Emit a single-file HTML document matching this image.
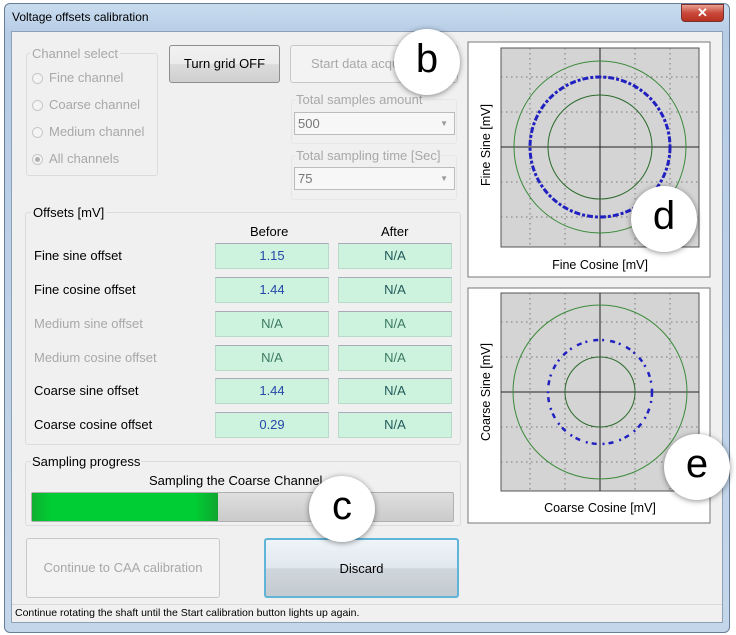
<!DOCTYPE html>
<html><head><style>
*{margin:0;padding:0;box-sizing:border-box}
body{width:736px;height:635px;background:#fff;position:relative;overflow:hidden;font-family:"Liberation Sans",Arial,sans-serif;font-size:13px;color:#000}
.a{position:absolute}
.grp{position:absolute;border:1px solid #dcdcdc;border-radius:3px}
.lbl{position:absolute;white-space:nowrap}
.dis{color:#a8a8a8}
.btn{position:absolute;border:1px solid #8e8e8e;border-radius:3px;background:linear-gradient(#f2f2f2,#ebebeb 50%,#dcdcdc 51%,#cfcfcf);text-align:center}
.box{position:absolute;background:#cdf3df;border:1px solid #b9d9c9;border-top-color:#aab;text-align:center;line-height:24px;width:114px;height:26px}
.circ{position:absolute;width:66px;height:66px;border-radius:50%;background:#fff;box-shadow:0 1px 6px rgba(0,0,0,.45);text-align:center;font-size:40px;line-height:60px}
.radio{position:absolute;width:11px;height:11px;border-radius:50%;border:1px solid #c8c8c8;background:#f4f4f4}
</style></head><body>
<div class="a" style="left:4px;top:3px;width:726px;height:630px;border:1px solid #6a7d96;border-radius:6px;background:linear-gradient(#c9dcef,#b7cde6 30px,#c4d6ea);"></div>
<div class="lbl" style="left:12px;top:10px;font-size:12px">Voltage offsets calibration</div>
<div class="a" style="left:681px;top:4px;width:43px;height:18px;border:1px solid #7a3030;border-radius:0 0 4px 4px;background:linear-gradient(#e8a090,#c9483a 50%,#b8301f);color:#fff;text-align:center;font-size:13px;font-weight:bold;line-height:16px">✕</div>
<div class="a" style="left:11px;top:31px;width:712px;height:592px;background:#f0f0f0;border:1px solid #8ea0b5"></div>
<div class="grp" style="left:26px;top:53px;width:132px;height:123px"></div>
<div class="lbl dis" style="left:30px;top:46px;background:#f0f0f0;padding:0 2px">Channel select</div>
<div class="radio" style="left:32px;top:73px"></div><div class="lbl dis" style="left:49px;top:70px">Fine channel</div>
<div class="radio" style="left:32px;top:100px"></div><div class="lbl dis" style="left:49px;top:97px">Coarse channel</div>
<div class="radio" style="left:32px;top:127px"></div><div class="lbl dis" style="left:49px;top:124px">Medium channel</div>
<div class="radio" style="left:32px;top:154px"><div class="a" style="left:2px;top:2px;width:5px;height:5px;border-radius:50%;background:#b0b0b0"></div></div><div class="lbl dis" style="left:49px;top:151px">All channels</div>
<div class="btn" style="left:169px;top:45px;width:111px;height:38px;line-height:36px">Turn grid OFF</div>
<div class="btn dis" style="left:290px;top:45px;width:168px;height:38px;line-height:36px;border-color:#c8c8c8;background:#f3f3f3;text-align:left;padding-left:20px">Start data acquisition</div>
<div class="grp" style="left:291px;top:99px;width:166px;height:45px;border-color:#e6e6e6"></div>
<div class="lbl dis" style="left:296px;top:92px;background:#f0f0f0">Total samples amount</div>
<div class="a" style="left:294px;top:112px;width:161px;height:23px;border:1px solid #bcbcbc;background:#f7f7f7;color:#777;padding:3px 3px;line-height:15px">500<span class="a" style="right:6px;top:3px;font-size:8px;color:#999">▼</span></div>
<div class="grp" style="left:291px;top:155px;width:166px;height:45px;border-color:#e6e6e6"></div>
<div class="lbl dis" style="left:296px;top:148px;background:#f0f0f0">Total sampling time [Sec]</div>
<div class="a" style="left:294px;top:167px;width:161px;height:23px;border:1px solid #bcbcbc;background:#f7f7f7;color:#777;padding:3px 3px;line-height:15px">75<span class="a" style="right:6px;top:3px;font-size:8px;color:#999">▼</span></div>
<div class="grp" style="left:25px;top:212px;width:436px;height:233px"></div>
<div class="lbl" style="left:31px;top:205px;background:#f0f0f0;padding:0 2px">Offsets [mV]</div>
<div class="lbl" style="left:250px;top:224px">Before</div>
<div class="lbl" style="left:381px;top:224px">After</div>
<div class="lbl" style="left:34px;top:248px">Fine sine offset</div>
<div class="box" style="left:215px;top:243px;color:#2648a8">1.15</div><div class="box" style="left:338px;top:243px;color:#235a5a">N/A</div>
<div class="lbl" style="left:34px;top:282px">Fine cosine offset</div>
<div class="box" style="left:215px;top:277px;color:#2648a8">1.44</div><div class="box" style="left:338px;top:277px;color:#235a5a">N/A</div>
<div class="lbl dis" style="left:34px;top:316px">Medium sine offset</div>
<div class="box" style="left:215px;top:311px;color:#3b7a5e">N/A</div><div class="box" style="left:338px;top:311px;color:#3b7a5e">N/A</div>
<div class="lbl dis" style="left:34px;top:350px">Medium cosine offset</div>
<div class="box" style="left:215px;top:345px;color:#3b7a5e">N/A</div><div class="box" style="left:338px;top:345px;color:#3b7a5e">N/A</div>
<div class="lbl" style="left:34px;top:383px">Coarse sine offset</div>
<div class="box" style="left:215px;top:378px;color:#2648a8">1.44</div><div class="box" style="left:338px;top:378px;color:#235a5a">N/A</div>
<div class="lbl" style="left:34px;top:417px">Coarse cosine offset</div>
<div class="box" style="left:215px;top:412px;color:#2648a8">0.29</div><div class="box" style="left:338px;top:412px;color:#235a5a">N/A</div>
<div class="grp" style="left:25px;top:461px;width:436px;height:65px"></div>
<div class="lbl" style="left:31px;top:454px;background:#f0f0f0;padding:0 1px">Sampling progress</div>
<div class="lbl" style="left:149px;top:473px">Sampling the Coarse Channel</div>
<div class="a" style="left:31px;top:492px;width:423px;height:30px;border:1px solid #b0b0b0;background:linear-gradient(#dedede,#cbcbcb);border-radius:2px"></div>
<div class="a" style="left:32px;top:493px;width:186px;height:28px;background:linear-gradient(90deg,#10b030,#00cc33 10%,#00cc33 88%,#10a530);"></div>
<div class="btn dis" style="left:26px;top:538px;width:194px;height:60px;line-height:58px;border-color:#c8c8c8;background:#f3f3f3">Continue to CAA calibration</div>
<div class="btn" style="left:264px;top:538px;width:195px;height:60px;line-height:58px;border:2px solid #5fb4d8;background:linear-gradient(#eef4f8,#e0e8ee 50%,#cfd6dc 51%,#c4cbd0)">Discard</div>
<div class="a" style="left:12px;top:604px;width:710px;height:1px;background:#d8d8d8"></div>
<div class="lbl" style="left:15px;top:607px;font-size:10.5px">Continue rotating the shaft until the Start calibration button lights up again.</div>
<svg class="a" style="left:467px;top:41px" width="245" height="488" viewBox="467 41 245 488" font-family="Liberation Sans, sans-serif">
<rect x="468" y="42" width="242" height="235" fill="#fff" stroke="#777"/>
<rect x="468" y="288" width="242" height="235" fill="#fff" stroke="#777"/>
<rect x="501" y="48" width="198" height="199" fill="#d4d4d4" stroke="#555"/>
<g stroke="#777" stroke-dasharray="1.5 3.5" stroke-width="1">
<path d="M530 48V247M565 48V247M635 48V247M670 48V247M501 77H699M501 112H699M501 182H699M501 217H699"/></g>
<path d="M600 48V247M501 147H699" stroke="#222"/>
<circle cx="600" cy="147" r="86" fill="none" stroke="#3a8a3a"/>
<circle cx="600" cy="147" r="52" fill="none" stroke="#2a6a2a"/>
<circle cx="600" cy="147" r="70" fill="none" stroke="#2020c0" stroke-width="3" stroke-dasharray="6 2 3 2"/>
<text x="600" y="269" font-size="12.5" text-anchor="middle">Fine Cosine [mV]</text>
<text transform="translate(490,145) rotate(-90)" font-size="12.5" text-anchor="middle">Fine Sine [mV]</text>
<rect x="501" y="293" width="198" height="198" fill="#d4d4d4" stroke="#555"/>
<g stroke="#777" stroke-dasharray="1.5 3.5">
<path d="M530 293V491M565 293V491M635 293V491M670 293V491M501 322H699M501 357H699M501 427H699M501 462H699"/></g>
<path d="M600 293V491M501 392H699" stroke="#222"/>
<circle cx="600" cy="392" r="87" fill="none" stroke="#3a8a3a"/>
<circle cx="600" cy="392" r="35" fill="none" stroke="#2a6a2a"/>
<circle cx="600" cy="392" r="52" fill="none" stroke="#2020c0" stroke-width="2.5" stroke-dasharray="5 4 2 6"/>
<text x="600" y="512" font-size="12.5" text-anchor="middle">Coarse Cosine [mV]</text>
<text transform="translate(490,392) rotate(-90)" font-size="12.5" text-anchor="middle">Coarse Sine [mV]</text>
</svg>
<div class="circ" style="left:394px;top:29px">b</div>
<div class="circ" style="left:309px;top:476px">c</div>
<div class="circ" style="left:631px;top:186px">d</div>
<div class="circ" style="left:664px;top:434px">e</div>
</body></html>
